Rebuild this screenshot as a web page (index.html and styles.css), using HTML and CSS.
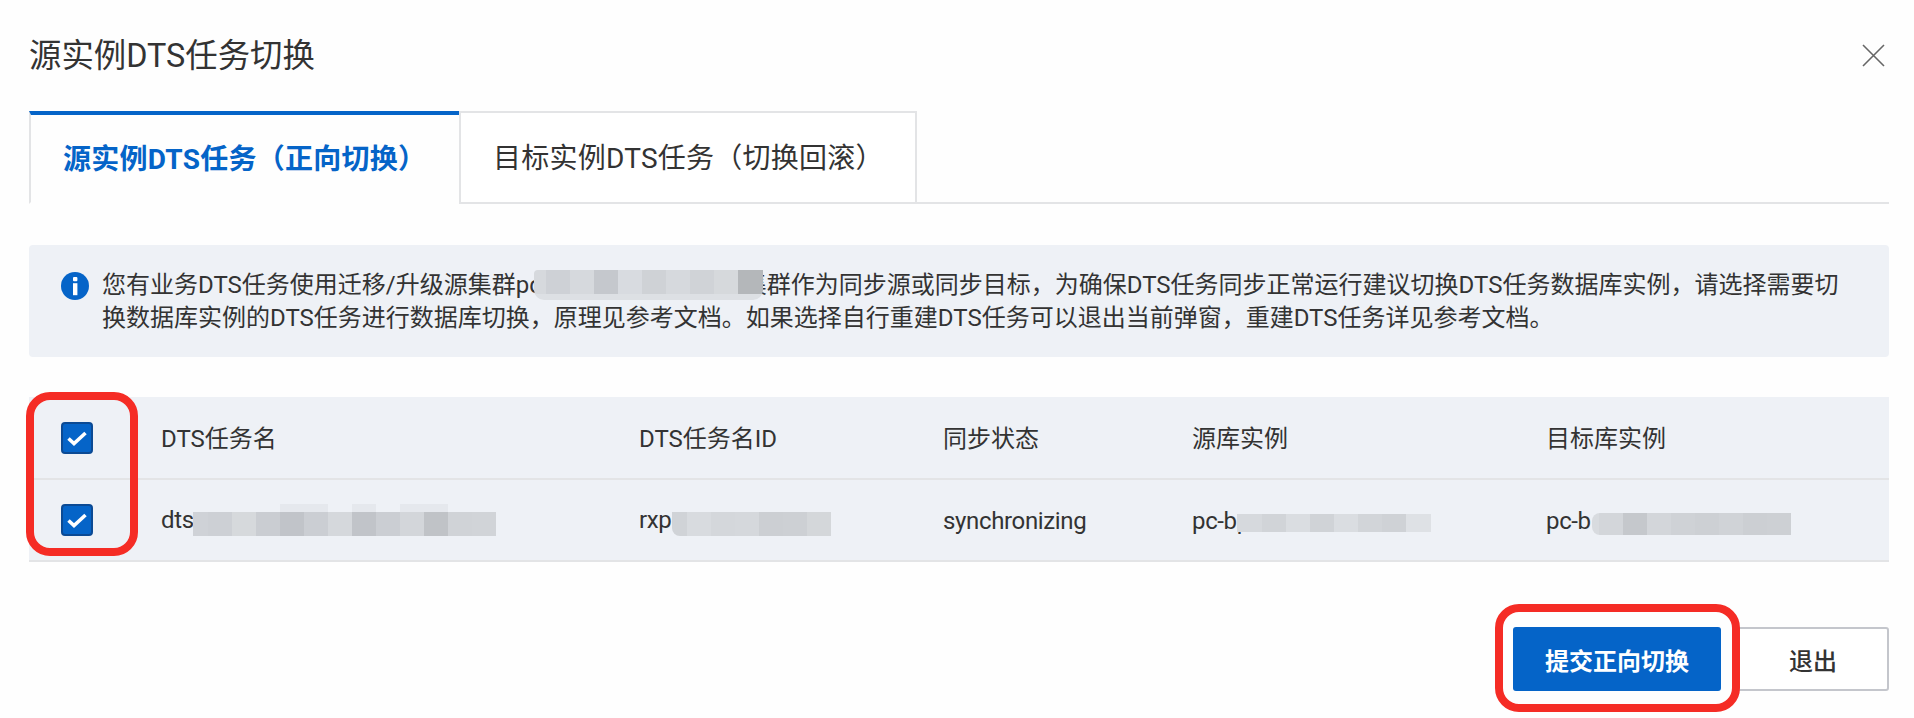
FILE: index.html
```html
<!DOCTYPE html>
<html lang="zh-CN">
<head>
<meta charset="utf-8">
<title>源实例DTS任务切换</title>
<link rel="stylesheet" href="styles.css">
</head>
<body>
<div class="dialog">
  <header class="dialog-head">
    <h1 class="dialog-title">源实例DTS任务切换</h1>
    <svg class="close" viewBox="0 0 23 23" aria-label="关闭"><path d="M1 1 22 22M22 1 1 22"/></svg>
  </header>
  <nav class="tabs">
    <div class="tab tab-active">源实例DTS任务（正向切换）</div>
    <div class="tab tab-idle">目标实例DTS任务（切换回滚）</div>
  </nav>
  <section class="alert">
    <svg class="alert-icon" viewBox="0 0 28 28"><circle cx="14" cy="14" r="14" fill="#0564c8"/><rect x="12" y="5" width="4.4" height="4.2" rx="1" fill="#fff"/><rect x="12" y="11.2" width="4.4" height="12" fill="#fff"/></svg>
    <p class="alert-text">您有业务DTS任务使用迁移/升级源集群pc<span class="mosaic m-alert"></span>集群作为同步源或同步目标，为确保DTS任务同步正常运行建议切换DTS任务数据库实例，请选择需要切<br>换数据库实例的DTS任务进行数据库切换，原理见参考文档。如果选择自行重建DTS任务可以退出当前弹窗，重建DTS任务详见参考文档。</p>
  </section>
  <table class="grid">
    <thead>
      <tr>
        <th class="c-check"><span class="check"><svg viewBox="0 0 28 28"><path d="M5.5 14.5 11 19.5 22.5 9"/></svg></span></th>
        <th class="c-name">DTS任务名</th>
        <th class="c-id">DTS任务名ID</th>
        <th class="c-state">同步状态</th>
        <th class="c-src">源库实例</th>
        <th class="c-dst">目标库实例</th>
      </tr>
    </thead>
    <tbody>
      <tr>
        <td><span class="check"><svg viewBox="0 0 28 28"><path d="M5.5 14.5 11 19.5 22.5 9"/></svg></span></td>
        <td>dts<span class="mosaic m-name"></span></td>
        <td>rxp<span class="mosaic m-id"></span></td>
        <td>synchronizing</td>
        <td>pc-bp<span class="mosaic m-src"></span></td>
        <td>pc-b<span class="mosaic m-dst"></span></td>
      </tr>
    </tbody>
  </table>
  <footer class="actions">
    <button class="btn btn-primary">提交正向切换</button>
    <button class="btn btn-plain">退出</button>
  </footer>
  <div class="mark mark-check"></div>
  <div class="mark mark-submit"></div>
</div>
</body>
</html>
```
FILE: styles.css
```css
* { box-sizing: border-box; }
html, body { margin: 0; padding: 0; background: #fefefe; }
body {
  width: 1914px;
  height: 718px;
  overflow: hidden;
  font-family: Roboto, "Noto Sans CJK SC", sans-serif;
  color: #333;
}
.dialog { position: relative; padding: 0 25px 0 29px; }
.dialog-head {
  display: flex;
  justify-content: space-between;
  align-items: center;
  height: 111px;
}
.dialog-title { margin: 0; font-size: 32.4px; font-weight: 400; line-height: 40px; }
.close { width: 23px; height: 23px; margin: 0 4px 0 0; }
.close path { fill: none; stroke: #666; stroke-width: 1.6; }
.tabs { display: flex; height: 93px; border-bottom: 2px solid #e3e4e6; }
.tab {
  display: flex;
  align-items: center;
  font-size: 28px;
  height: 93px;
  padding-bottom: 4px;
  letter-spacing: 0.25px;
  white-space: nowrap;
}
.tab-active {
  width: 430px;
  padding-left: 32px;
  border-top: 4px solid #0564c8;
  border-left: 2px solid #e3e4e6;
  border-bottom: 2px solid #fefefe;
  color: #0564c8;
  font-weight: 700;
}
.tab-idle {
  width: 458px;
  padding-left: 32px;
  border: 2px solid #e3e4e6;
  border-bottom: 2px solid #e3e4e6;
  background: #fff;
}
.alert {
  display: flex;
  gap: 13px;
  height: 112px;
  margin-top: 41px;
  padding: 24px 0 0 32px;
  background: #eef1f6;
  border-radius: 4px;
}
.alert-icon { width: 28px; height: 28px; margin-top: 3px; flex: none; }
.alert-text { margin: 0; font-size: 24px; line-height: 33px; white-space: nowrap; }
.mosaic { display: inline-block; vertical-align: middle; }
.m-alert {
  position: relative;
  z-index: 1;
  width: 229px;
  height: 30px;
  margin: -4px -20px 0 -8px;
  border-radius: 4px 0 10px 10px;
  background:
    linear-gradient(#dde0e4, #dde0e4) bottom / 100% 6px no-repeat,
    linear-gradient(90deg, #d6d9dd 0 12px, #ced1d6 12px 36px, #d6d9dd 36px 60px, #c5c8cd 60px 84px, #d8dbe0 84px 108px, #cfd2d6 108px 132px, #d6d9dd 132px 156px, #d0d3d7 156px 180px, #d6d9dc 180px 204px, #b4b7ba 204px 229px);
}
.m-name {
  width: 303px;
  height: 32px;
  margin: -2px 0 0 -1px;
  background:
    linear-gradient(90deg, transparent 87px, #e5e8ed 87px 135px, transparent 135px 159px, #e5e8ed 159px 183px, transparent 183px 207px, #e5e8ed 207px 255px, transparent 255px) top / 100% 8px no-repeat,
    linear-gradient(90deg, #cfd2d7 0 15px, #cdd0d5 15px 39px, #d6d9dc 39px 63px, #cacdd2 63px 87px, #c1c4c9 87px 111px, #cbced3 111px 135px, #d5d8dc 135px 159px, #c1c4c9 159px 183px, #cbced3 183px 207px, #d3d6da 207px 231px, #c0c3c7 231px 255px, #d0d3d7 255px 279px, #d1d4d8 279px 303px) bottom / 100% 24px no-repeat;
}
.m-id {
  width: 159px;
  height: 24px;
  margin: 6px 0 0 1px;
  border-radius: 0 0 0 8px;
  background: linear-gradient(90deg, #d0d3d7 0 15px, #d8dbdf 15px 39px, #d4d7db 39px 63px, #d5d8dc 63px 87px, #cccfd3 87px 111px, #cdd0d4 111px 135px, #d4d7da 135px 159px);
}
.m-src {
  width: 194px;
  height: 18px;
  margin: 0 0 0 -13px;
  background: linear-gradient(90deg, #d6d9dd 0 25px, #d1d4d8 25px 49px, #dadde1 49px 73px, #d0d3d7 73px 97px, #dadde1 97px 121px, #d2d5d9 121px 145px, #cfd2d6 145px 169px, #dee1e5 169px 194px);
}
.m-dst {
  width: 199px;
  height: 22px;
  margin: 4px 0 0 1px;
  border-radius: 8px 0 0 8px;
  background: linear-gradient(90deg, #d8dbdf 0 7px, #d3d6da 7px 31px, #c5c8cc 31px 55px, #d3d6da 55px 79px, #cfd2d6 79px 103px, #cdd0d4 103px 127px, #d0d3d7 127px 151px, #cccfd3 151px 175px, #cdd0d4 175px 199px);
}
.grid {
  width: 1860px;
  margin-top: 40px;
  border-collapse: collapse;
  table-layout: fixed;
  background: #eef1f6;
  font-size: 24px;
}
.grid th, .grid td {
  padding: 0;
  font-weight: 400;
  text-align: left;
  white-space: nowrap;
  border-bottom: 2px solid #e3e4e6;
}
.grid th + th { padding-bottom: 2px; }
.grid td { letter-spacing: -0.35px; }
.grid td + td { padding-top: 2px; }
.grid thead tr { height: 82px; }
.grid tbody tr { height: 82px; }
.c-check { width: 132px; }
.c-name { width: 478px; }
.c-id { width: 304px; }
.c-state { width: 249px; }
.c-src { width: 354px; }
.c-dst { width: 343px; }
.check {
  display: flex;
  width: 32px;
  height: 32px;
  margin-left: 32px;
  background: #0564c8;
  border: 2px solid #0b4a94;
  border-radius: 4px;
}
.check svg { width: 28px; height: 28px; }
.check path { fill: none; stroke: #fff; stroke-width: 3.6; }
.actions { display: flex; justify-content: flex-end; gap: 12px; margin-top: 65px; }
.btn {
  height: 64px;
  padding: 0;
  font: inherit;
  font-size: 24px;
  border-radius: 3px;
}
.btn-primary {
  width: 208px;
  color: #fff;
  font-weight: 700;
  background: #0564c8;
  border: 0;
}
.btn-plain {
  width: 156px;
  padding-left: 4px;
  color: #333;
  font-weight: 500;
  background: #fff;
  border: 2px solid #c4c6cc;
}
.mark { position: absolute; border: 8px solid #f52c25; border-radius: 24px; }
.mark-check { left: 26px; top: 392px; width: 112px; height: 164px; }
.mark-submit { left: 1495px; top: 604px; width: 245px; height: 108px; }
```
